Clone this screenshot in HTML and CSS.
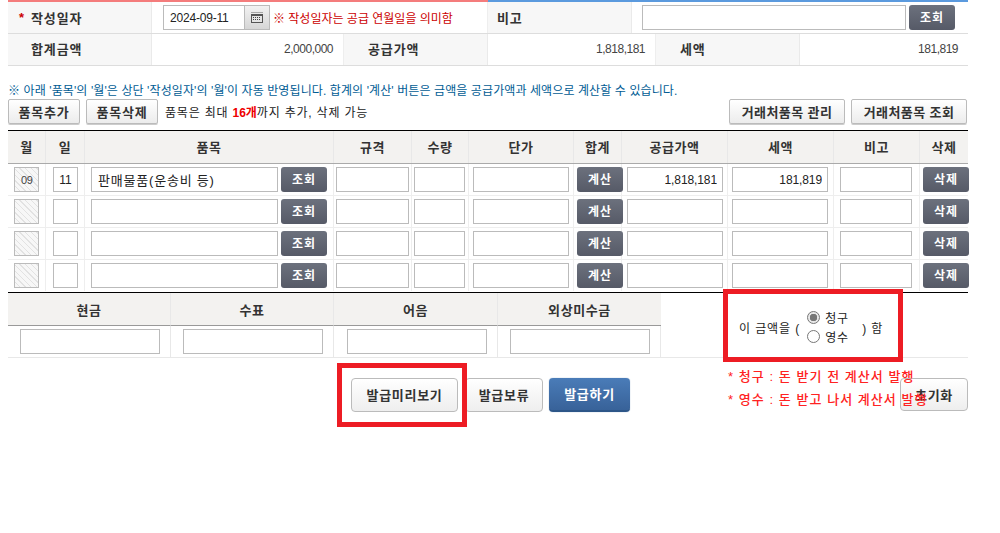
FILE: index.html
```html
<!DOCTYPE html>
<html lang="ko">
<head>
<meta charset="utf-8">
<title>세금계산서 발급</title>
<link rel="stylesheet" href="styles.css">
</head>
<body>
<main class="page">
  <div class="topbar"><span class="topbar-red"></span><span class="topbar-blue"></span></div>

  <section class="summary-row first">
    <div class="label"><b class="star">*</b>작성일자</div>
    <div class="value date-cell">
      <input class="field date" type="text" value="2024-09-11">
      <span class="cal-btn">
        <svg width="12" height="11" viewBox="0 0 12 11"><path d="M1 0h1M3 0h1M5 0h1M7 0h1M9 0h1M11 0h1" stroke="#666" fill="none" transform="translate(-.5 .5)"/><rect x="0" y="2" width="12" height="9" fill="#555"/><rect x="1" y="4" width="10" height="6" fill="#e4e4e4"/><path d="M2 5.5h8M2 7.5h8" stroke="#444" stroke-dasharray="1 1"/></svg>
      </span>
      <span class="date-note">※ 작성일자는 공급 연월일을 의미함</span>
    </div>
    <div class="label note-label">비고</div>
    <div class="value note-cell">
      <input class="field note-input" type="text">
      <button class="btn-dark" type="button">조회</button>
    </div>
  </section>

  <section class="summary-row second">
    <div class="label">합계금액</div>
    <div class="value num">2,000,000</div>
    <div class="label">공급가액</div>
    <div class="value num">1,818,181</div>
    <div class="label">세액</div>
    <div class="value num">181,819</div>
  </section>

  <p class="notice">※ 아래 '품목'의 '월'은 상단 '작성일자'의 '월'이 자동 반영됩니다. 합계의 '계산' 버튼은 금액을 공급가액과 세액으로 계산할 수 있습니다.</p>

  <div class="toolbar">
    <button class="btn-light add" type="button">품목추가</button>
    <button class="btn-light add" type="button">품목삭제</button>
    <span class="tool-text">품목은 최대 <b>16개</b>까지 추가, 삭제 가능</span>
    <button class="btn-light partner first-partner" type="button">거래처품목 관리</button>
    <button class="btn-light partner" type="button">거래처품목 조회</button>
  </div>

  <section class="items">
    <div class="items-row head">
      <div>월</div><div>일</div><div>품목</div><div>규격</div><div>수량</div><div>단가</div><div>합계</div><div>공급가액</div><div>세액</div><div>비고</div><div>삭제</div>
    </div>
    <div class="items-row">
      <div><input class="field hatch" type="text" value="09"></div>
      <div><input class="field center" type="text" value="11"></div>
      <div><input class="field left" type="text" value="판매물품(운송비 등)"><button class="btn-dark" type="button">조회</button></div>
      <div><input class="field" type="text"></div>
      <div><input class="field" type="text"></div>
      <div><input class="field" type="text"></div>
      <div><button class="btn-dark" type="button">계산</button></div>
      <div><input class="field right" type="text" value="1,818,181"></div>
      <div><input class="field right" type="text" value="181,819"></div>
      <div><input class="field" type="text"></div>
      <div><button class="btn-dark" type="button">삭제</button></div>
    </div>
    <div class="items-row">
      <div><input class="field hatch" type="text"></div>
      <div><input class="field" type="text"></div>
      <div><input class="field" type="text"><button class="btn-dark" type="button">조회</button></div>
      <div><input class="field" type="text"></div>
      <div><input class="field" type="text"></div>
      <div><input class="field" type="text"></div>
      <div><button class="btn-dark" type="button">계산</button></div>
      <div><input class="field" type="text"></div>
      <div><input class="field" type="text"></div>
      <div><input class="field" type="text"></div>
      <div><button class="btn-dark" type="button">삭제</button></div>
    </div>
    <div class="items-row">
      <div><input class="field hatch" type="text"></div>
      <div><input class="field" type="text"></div>
      <div><input class="field" type="text"><button class="btn-dark" type="button">조회</button></div>
      <div><input class="field" type="text"></div>
      <div><input class="field" type="text"></div>
      <div><input class="field" type="text"></div>
      <div><button class="btn-dark" type="button">계산</button></div>
      <div><input class="field" type="text"></div>
      <div><input class="field" type="text"></div>
      <div><input class="field" type="text"></div>
      <div><button class="btn-dark" type="button">삭제</button></div>
    </div>
    <div class="items-row last">
      <div><input class="field hatch" type="text"></div>
      <div><input class="field" type="text"></div>
      <div><input class="field" type="text"><button class="btn-dark" type="button">조회</button></div>
      <div><input class="field" type="text"></div>
      <div><input class="field" type="text"></div>
      <div><input class="field" type="text"></div>
      <div><button class="btn-dark" type="button">계산</button></div>
      <div><input class="field" type="text"></div>
      <div><input class="field" type="text"></div>
      <div><input class="field" type="text"></div>
      <div><button class="btn-dark" type="button">삭제</button></div>
    </div>
  </section>

  <section class="payment">
    <div class="pay-grid">
      <div class="pay-head">현금</div><div class="pay-head">수표</div><div class="pay-head">어음</div><div class="pay-head">외상미수금</div>
      <div class="pay-cell"><input class="field" type="text"></div>
      <div class="pay-cell"><input class="field" type="text"></div>
      <div class="pay-cell"><input class="field" type="text"></div>
      <div class="pay-cell"><input class="field" type="text"></div>
    </div>
    <div class="claim">
      <span>이 금액을 (</span>
      <div class="claim-options">
        <label><input class="radio" type="radio" name="kind" checked>청구</label>
        <label><input class="radio" type="radio" name="kind">영수</label>
      </div>
      <span>) 함</span>
    </div>
  </section>

  <div class="actions">
    <button class="btn-light big preview" type="button">발급미리보기</button>
    <button class="btn-light big hold" type="button">발급보류</button>
    <button class="btn-blue" type="button">발급하기</button>
    <button class="btn-light big reset" type="button">초기화</button>
    <div class="red-note">
      <p>* 청구 : 돈 받기 전 계산서 발행</p>
      <p>* 영수 : 돈 받고 나서 계산서 발행</p>
    </div>
  </div>

  <div class="mark mark-claim"></div>
  <div class="mark mark-preview"></div>
</main>
</body>
</html>
```

FILE: styles.css
```css
* { box-sizing: border-box; }

html, body { margin: 0; padding: 0; background: #fff; }

body {
  font-family: "Liberation Sans", "Noto Sans CJK KR", sans-serif;
  font-size: 12px;
  color: #222;
  overflow: hidden;
}

p { margin: 0; }

.page {
  position: relative;
  width: 960px;
  height: 533px;
  margin-left: 8px;
}

.topbar { display: flex; height: 2px; }
.topbar-red { width: 480px; background: #f47c7c; }
.topbar-blue { width: 480px; background: #5b9ade; }

.summary-row {
  display: grid;
  border-bottom: 1px solid #ddd;
}
.summary-row.first { grid-template-columns: 144px 336px 144px 336px; height: 32px; }
.summary-row.second { grid-template-columns: 144px 192px 144px 168px 144px 168px; height: 32px; }
.summary-row.second > div { padding-bottom: 2px; }

.label {
  display: flex;
  align-items: center;
  background: #f7f7f7;
  padding-left: 23px;
  font-weight: 700;
  font-size: 13px;
  letter-spacing: .9px;
  color: #333;
  border-right: 1px solid #eaeaea;
}
.summary-row.second .label:nth-child(3) { padding-left: 24px; }
.summary-row.second .label:nth-child(5) { padding-left: 24px; }
.note-label { padding-left: 9px; }

.star { color: #c00; width: 0; margin-left: -12px; margin-right: 12px; }

.value {
  display: flex;
  align-items: center;
  border-right: 1px solid #eee;
}
.value:last-child { border-right: 0; }
.value.num { justify-content: flex-end; padding-right: 10px; color: #444; letter-spacing: -.5px; }

.date-cell { padding-left: 11px; }
.note-cell { padding-left: 10px; gap: 3px; }

.field {
  height: 25px;
  border: 1px solid #bbb;
  background: #fff;
  padding: 0 4px;
  margin: 0;
  font: inherit;
  color: #222;
  outline: 0;
  border-radius: 0;
}
.date { width: 82px; padding-left: 6px; letter-spacing: -.2px; }
.note-input { width: 264px; }

.cal-btn {
  display: flex;
  align-items: center;
  justify-content: center;
  width: 25px;
  height: 25px;
  border: 1px solid #bbb;
  border-left: 0;
  background: linear-gradient(#f2f2f2, #d6d6d6);
}

.date-note {
  margin-left: 3px;
  color: #c00;
  font-size: 12px;
}

.btn-dark {
  width: 46px;
  height: 25px;
  padding: 0 0 3px;
  flex: none;
  border: 0;
  border-radius: 3px;
  background: linear-gradient(#6c717d, #565a67);
  color: #fff;
  font: inherit;
  font-weight: 700;
  letter-spacing: 1px;
}

.notice {
  height: 33px;
  padding-top: 17px;
  line-height: 16px;
  font-size: 12px;
  letter-spacing: .1px;
  color: #005c94;
  white-space: nowrap;
}

.toolbar {
  display: flex;
  align-items: center;
  height: 25px;
  margin-bottom: 6px;
}

.btn-light {
  height: 25px;
  padding: 0 0 1px;
  border: 1px solid #bbb;
  border-radius: 2px;
  background: linear-gradient(#fff, #ececec);
  box-shadow: 0 1px 0 #ccc;
  font: inherit;
  font-size: 13px;
  font-weight: 700;
  letter-spacing: .8px;
  color: #333;
  flex: none;
}
.btn-light.add { width: 72px; margin-right: 6px; }
.btn-light.partner { width: 116px; margin-left: 6px; letter-spacing: .4px; }
.btn-light.first-partner { margin-left: auto; }
.toolbar .partner:last-child { margin-right: 1px; }

.tool-text { margin-left: 1px; letter-spacing: .8px; color: #222; }
.tool-text b { color: #e00; letter-spacing: 0; }

.items { border-top: 1px solid #000; border-bottom: 1px solid #000; }

.items-row {
  display: grid;
  grid-template-columns: 38px 39px 249px 78px 57px 105px 48px 106px 106px 86px 48px;
  height: 32px;
  border-bottom: 1px solid #eee;
}
.items-row.last { height: 32px; border-bottom: 0; padding-bottom: 1px; }
.items-row > div {
  display: flex;
  align-items: center;
  border-right: 1px solid #eee;
}
.items-row > div:last-child { border-right: 0; }

.items-row.head {
  height: 33px;
  background: #f3f2f0;
  border-bottom: 1px solid #aaa;
  font-weight: 700;
  font-size: 13px;
  letter-spacing: .6px;
  color: #333;
}
.items-row.head > div { justify-content: center; border-right-color: #e8e8e8; padding-bottom: 2px; }

.items-row:not(.head) > div:nth-child(1) { padding-left: 6px; }
.items-row:not(.head) > div:nth-child(1) .field { width: 25px; }
.items-row:not(.head) > div:nth-child(2) { padding-left: 7px; }
.items-row:not(.head) > div:nth-child(2) .field { width: 25px; }
.items-row:not(.head) > div:nth-child(3) { padding-left: 6px; gap: 3px; }
.items-row:not(.head) > div:nth-child(3) .field { width: 187px; }
.items-row:not(.head) > div:nth-child(4) { padding-left: 2px; }
.items-row:not(.head) > div:nth-child(4) .field { width: 73px; }
.items-row:not(.head) > div:nth-child(5) { padding-left: 2px; }
.items-row:not(.head) > div:nth-child(5) .field { width: 51px; }
.items-row:not(.head) > div:nth-child(6) { padding-left: 4px; }
.items-row:not(.head) > div:nth-child(6) .field { width: 96px; }
.items-row:not(.head) > div:nth-child(7) { padding-left: 3px; }
.items-row:not(.head) > div:nth-child(8) { padding-left: 5px; }
.items-row:not(.head) > div:nth-child(8) .field { width: 96px; }
.items-row:not(.head) > div:nth-child(9) { padding-left: 4px; }
.items-row:not(.head) > div:nth-child(9) .field { width: 96px; }
.items-row:not(.head) > div:nth-child(10) { padding-left: 6px; }
.items-row:not(.head) > div:nth-child(10) .field { width: 72px; }
.items-row:not(.head) > div:nth-child(11) { padding-left: 3px; }

.hatch {
  background: repeating-linear-gradient(45deg, #f7f7f7 0 3px, #e2e2e2 3px 4px);
  padding: 0 0 0 6px;
  font-size: 11px;
  color: #444;
  letter-spacing: -.3px;
}
.center { text-align: center; padding: 0; }
.left { padding-left: 6px; font-size: 13px; letter-spacing: .8px; }
.right { text-align: right; padding-right: 5px; letter-spacing: -.1px; }

.payment {
  display: grid;
  grid-template-columns: 653px 307px;
  height: 65px;
  border-bottom: 1px solid #e8e8e8;
}
.pay-grid {
  display: grid;
  grid-template-columns: 163px 163px 164px 163px;
  grid-template-rows: 33px 31px;
  border-right: 1px solid #e8e8e8;
}
.pay-head {
  display: flex;
  align-items: center;
  justify-content: center;
  background: #f3f2f0;
  border-bottom: 1px solid #999;
  border-right: 1px solid #e8e8e8;
  font-weight: 700;
  font-size: 13px;
  letter-spacing: .6px;
  color: #333;
}
.pay-head:nth-child(4) { border-right: 0; }
.pay-cell {
  display: flex;
  align-items: center;
  padding-left: 12px;
  border-right: 1px solid #e8e8e8;
}
.pay-cell:nth-child(7) { padding-left: 13px; }
.pay-cell:last-child { border-right: 0; }
.pay-cell .field { width: 140px; }

.claim {
  display: flex;
  align-items: center;
  padding: 4px 0 0 78px;
  letter-spacing: .9px;
}
.claim-options { display: flex; flex-direction: column; width: 55px; margin-left: 7px; }
.claim-options label { display: flex; align-items: center; height: 19px; }

.radio {
  appearance: none;
  width: 13px;
  height: 13px;
  margin: 0 5px 0 0;
  border: 1px solid #777;
  border-radius: 50%;
  background: #fff;
}
.radio:checked { background: radial-gradient(circle, #777 0 3.5px, #e8e8e8 4px); }

.actions {
  position: relative;
  display: flex;
  height: 34px;
  margin-top: 20px;
  padding-left: 343px;
}
.btn-light.big {
  height: 34px;
  font-size: 13px;
  letter-spacing: .7px;
  border-radius: 4px;
  background: linear-gradient(#fff, #eee);
  box-shadow: none;
}
.preview { width: 107px; }
.hold { width: 78px; margin-left: 7px; }
.btn-blue {
  width: 81px;
  height: 34px;
  margin-left: 6px;
  padding: 0 0 2px;
  border: 0;
  border-bottom: 2px solid #2d5688;
  border-radius: 4px;
  background: linear-gradient(#4a7cb8, #386299);
  color: #fff;
  font: inherit;
  font-size: 13px;
  font-weight: 700;
  letter-spacing: .7px;
  box-shadow: 0 0 1px #6b8fbb;
}
.btn-light.reset { width: 68px; height: 33px; margin-left: auto; }

.red-note {
  position: absolute;
  left: 720px;
  top: -13px;
  color: #f22;
  font-size: 13px;
  font-weight: 500;
  letter-spacing: 1.05px;
  white-space: nowrap;
}
.red-note p { height: 23px; line-height: 23px; }

.mark {
  position: absolute;
  border: 5px solid #ed1c24;
  pointer-events: none;
}
.mark-claim { left: 715px; top: 289px; width: 180px; height: 73px; }
.mark-preview { left: 329px; top: 363px; width: 130px; height: 64px; }
```
